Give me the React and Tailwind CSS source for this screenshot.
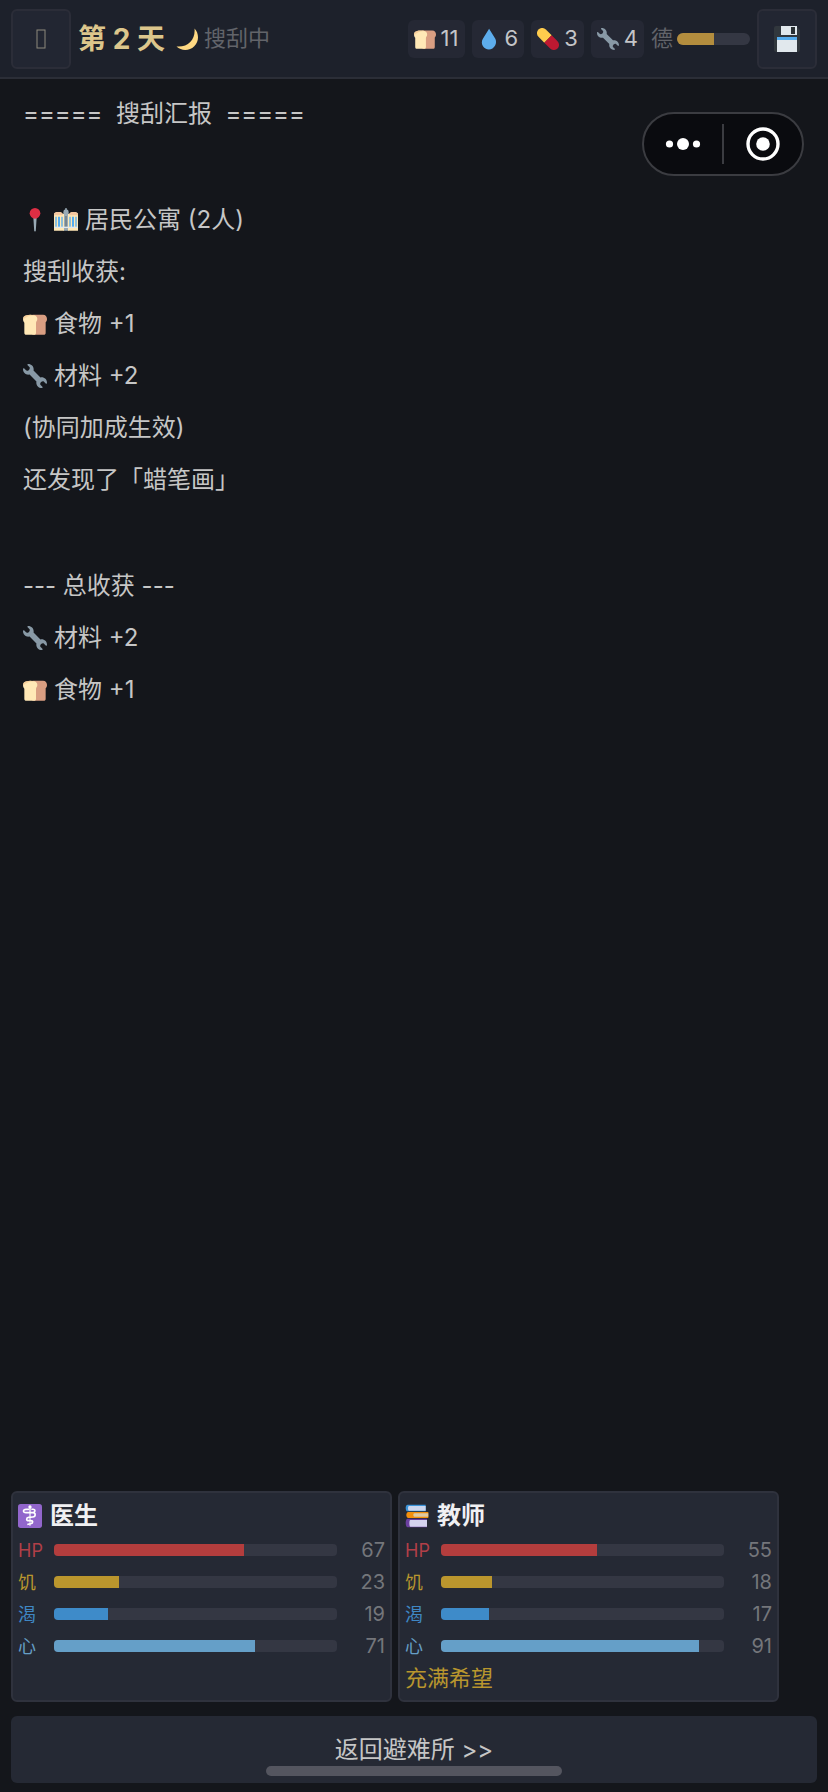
import React from 'react';

const Bread = ({ className }) => (
  <svg viewBox="0 0 36 36" className={className} aria-hidden="true">
    <path fill="#D99E82" d="M14 4h16c4 0 6 3 6 6.5 0 2.5-1 4-2 5V31c0 2-1 3-3 3H14z" />
    <path fill="#FFE8B6" d="M5 5c3-1 9-1 12 0 3 .8 4.500 3 4.500 5.500 0 3-2 3.500-2 6V31c0 2-1 3-2.500 3H5c-2 0-3-1-3-3V16C1 15 0 13 0 10.500 0 7.500 2 5.500 5 5z" />
    <path fill="#F4BF8A" d="M5 5c3-1 9-1 12 0-5 .7-8 .7-12 3-2 1-3 2-4.500 4C-.5 8 2 5.500 5 5z" opacity=".6" />
  </svg>
);

const Drop = ({ className }) => (
  <svg viewBox="0 0 36 36" className={className} aria-hidden="true">
    <path fill="#5DADEC" d="M28.344 17.768L18.148 1.09 8 17.654c-2.2 3.51-2.392 8.074-.081 11.854 3.285 5.373 10.363 7.098 15.811 3.857 5.446-3.24 7.199-10.22 4.614-15.597z" />
  </svg>
);

const Pill = ({ className }) => (
  <svg viewBox="0 0 36 36" className={className} aria-hidden="true">
    <g transform="rotate(45 18 18)">
      <path fill="#FFCC4D" d="M18 9.5H4.500a8.500 8.500 0 0 0 0 17H18z" />
      <path fill="#BE1931" d="M18 9.5h13.500a8.500 8.500 0 0 1 0 17H18z" />
    </g>
  </svg>
);

const Wrench = ({ className }) => (
  <svg viewBox="0 0 36 36" className={className} aria-hidden="true">
    <path fill="#8899A6" d="M27.989 19.977c-.622 0-1.225.078-1.806.213L15.811 9.818c.134-.581.212-1.184.212-1.806C16.023 3.587 12.436 0 8.012 0 7.11 0 5.91.916 6.909 1.915l2.997 2.998s.999 1.998-.999 3.995-3.996.998-3.996.998L1.915 6.909C.916 5.91 0 7.105 0 8.012c0 4.425 3.587 8.012 8.012 8.012.622 0 1.225-.078 1.806-.212l10.371 10.371c-.135.581-.213 1.184-.213 1.806 0 4.425 3.588 8.011 8.012 8.011.901 0 2.101-.916 1.102-1.915l-2.997-2.997s-.999-1.998.999-3.995 3.995-.999 3.995-.999l2.997 2.997c1 .999 1.916-.196 1.916-1.102 0-4.425-3.587-8.012-8.011-8.012z" />
  </svg>
);

const Moon = ({ className }) => (
  <svg viewBox="0 0 36 36" className={className} aria-hidden="true">
    <path fill="#FFD983" d="M30.312.776C32 19 20 32 .776 30.312c8.199 7.717 21.091 7.588 29.107-.429C37.9 21.867 38.03 8.975 30.312.776z" />
  </svg>
);

const Floppy = ({ className }) => (
  <svg viewBox="0 0 28 28" className={className} aria-hidden="true">
    <path fill="#31373D" d="M3 1h20l4 4v20a2 2 0 0 1-2 2H3a2 2 0 0 1-2-2V3a2 2 0 0 1 2-2z" />
    <path fill="#E1E8ED" d="M8 1h16v9H8zM4 15h20v12H4z" />
    <path fill="#292F33" d="M18 2h4v7h-4z" />
    <path fill="#55ACEE" d="M4 12h20v3H4z" />
  </svg>
);

const Pin = ({ className }) => (
  <svg viewBox="0 0 36 36" className={className} aria-hidden="true">
    <path fill="#99AAB5" d="M15.5 14h5l-1.300 20a1.200 1.200 0 0 1-2.400 0z" />
    <circle cx="18" cy="8" r="8" fill="#DD2E44" />
  </svg>
);

const Building = ({ className }) => (
  <svg viewBox="0 0 36 36" className={className} aria-hidden="true">
    <path fill="#99AAB5" d="M14 34V6a4 4 0 0 1 3-4V0h2v2a4 4 0 0 1 3 4v28z" />
    <path fill="#FFE8B6" d="M0 34V9c1-4 12-4 13 0h2v25zM36 34V9c-1-4-12-4-13 0h-2v25z" />
    <path fill="#F4C7A0" d="M0 9c1-4 12-4 13 0v2H0zM36 9c-1-4-12-4-13 0v2h13z" />
    <path fill="#55ACEE" d="M2 13h2v17H2zM6 13h3v17H6zM11 13h2v17h-2zM23 13h2v17h-2zM27 13h3v17h-3zM32 13h2v17h-2z" />
    <path fill="#66757F" d="M17 12h2v18h-2z" />
    <path fill="#E1E8ED" d="M0 28h36v2H0z" />
  </svg>
);

const Medical = ({ className }) => (
  <svg viewBox="0 0 36 36" className={className} aria-hidden="true">
    <rect width="36" height="36" rx="4" fill="#9266CC" />
    <circle cx="18" cy="4.5" r="2.500" fill="#FFF" />
    <path fill="#FFF" d="M17 4h2l-.4 29h-1.200z" />
    <path
      fill="none"
      stroke="#FFF"
      strokeWidth="2.4"
      strokeLinecap="round"
      d="M16 8h-4c-5 0-5 5 0 5h10c5 0 5 6 0 6.500l-6 .5c-4 .5-4 5 0 5h3c4 0 4 4 0 4.500l-4 1M21 8c5-1 6 3 2 5"
    />
  </svg>
);

const Books = ({ className }) => (
  <svg viewBox="0 0 36 36" className={className} aria-hidden="true">
    <path fill="#3B94D9" d="M4 1h27v10H4c-4 0-4-10 0-10z" />
    <path fill="#CCD6EE" d="M6 3h25v7H6c-2 0-2-7 0-7z" />
    <path fill="#F4900C" d="M5 12h30v9H5c-4 0-4-9 0-9z" />
    <path fill="#E0C9A0" d="M14 14h21v5H14c-2 0-2-5 0-5z" />
    <path fill="#6B3FA0" d="M4 22h29v13H4c-4 0-4-13 0-13z" />
    <path fill="#D5D3EE" d="M8 24h25v10H8c-2 0-2-10 0-10z" />
  </svg>
);

const resources = [
  { name: '食物', Icon: Bread, value: 11 },
  { name: '水', Icon: Drop, value: 6 },
  { name: '药品', Icon: Pill, value: 3 },
  { name: '材料', Icon: Wrench, value: 4 },
];

const report = [
  { text: '=====  搜刮汇报  =====' },
  { blank: true },
  { icons: [Pin, Building], text: '居民公寓 (2人)' },
  { text: '搜刮收获:' },
  { icons: [Bread], text: '食物 +1' },
  { icons: [Wrench], text: '材料 +2' },
  { text: '(协同加成生效)' },
  { text: '还发现了「蜡笔画」' },
  { blank: true },
  { text: '--- 总收获 ---' },
  { icons: [Wrench], text: '材料 +2' },
  { icons: [Bread], text: '食物 +1' },
];

const survivors = [
  { name: '医生', Icon: Medical, hp: 67, hunger: 23, thirst: 19, mind: 71 },
  { name: '教师', Icon: Books, hp: 55, hunger: 18, thirst: 17, mind: 91, status: '充满希望' },
];

const stats = [
  { key: 'hp', label: 'HP', text: 'text-[#b03f48]', bar: 'bg-[#b43d3d]' },
  { key: 'hunger', label: '饥', text: 'text-[#b8962e]', bar: 'bg-[#bb962d]' },
  { key: 'thirst', label: '渴', text: 'text-[#3f87c4]', bar: 'bg-[#3e8bc9]' },
  { key: 'mind', label: '心', text: 'text-[#669fc6]', bar: 'bg-[#659fc8]' },
];

const Header = () => (
  <header className="flex h-[79px] items-center gap-[7px] border-b-2 border-[#2b2e37] bg-[#1d212b] px-[11px]">
    <button
      aria-label="菜单"
      className="flex size-[60px] shrink-0 items-center justify-center rounded-md border-2 border-[#2b2d38] bg-[#222632]"
    >
      <svg viewBox="0 0 10 20" className="h-5 w-2.5" aria-hidden="true">
        <rect x="1" y="1" width="8" height="18" fill="none" stroke="#8d897c" />
      </svg>
    </button>
    <h1 className="whitespace-nowrap text-[28px] font-bold text-[#dcc68c]">第 2 天</h1>
    <div className="flex items-center gap-1.5 whitespace-nowrap pl-1 text-[22px] text-[#62646a]">
      <Moon className="size-[22px]" />
      搜刮中
    </div>

    <div className="ml-auto flex items-center gap-[7px]">
      {resources.map(({ name, Icon, value }) => (
        <div
          key={name}
          title={name}
          className="flex h-[38px] items-center gap-[5px] rounded-md bg-[#252834] px-1.5 text-[22px] text-[#c4c5c8]"
        >
          <Icon className="size-[22px]" />
          {value}
        </div>
      ))}
      <div className="flex items-center gap-1 text-[22px] text-[#62646a]">
        德
        <div className="h-3 w-[73px] overflow-hidden rounded-md bg-[#343743]">
          <div className="h-full bg-[#b38d3e]" style={{ width: '50%' }} />
        </div>
      </div>
      <button
        aria-label="保存"
        className="flex size-[60px] shrink-0 items-center justify-center rounded-md border-2 border-[#2b2d38] bg-[#222632]"
      >
        <Floppy className="size-7" />
      </button>
    </div>
  </header>
);

// Floating mini-program controls
const Capsule = () => (
  <div className="absolute right-6 top-28 flex h-16 w-[162px] items-center rounded-full border-2 border-[#3b3c41] bg-[#0a0b0f]">
    <button aria-label="更多" className="flex flex-1 justify-center">
      <svg viewBox="0 0 36 14" className="h-3.5 w-9" fill="#fff" aria-hidden="true">
        <circle cx="4.5" cy="7" r="3.6" />
        <circle cx="18" cy="7" r="6" />
        <circle cx="31.5" cy="7" r="3.6" />
      </svg>
    </button>
    <div className="h-10 w-0.5 bg-[#3b3c41]" />
    <button aria-label="关闭" className="flex flex-1 justify-center">
      <svg viewBox="0 0 34 34" className="size-[34px]" aria-hidden="true">
        <circle cx="17" cy="17" r="15" fill="none" stroke="#fff" strokeWidth="3.4" />
        <circle cx="17" cy="17" r="6.8" fill="#fff" />
      </svg>
    </button>
  </div>
);

const StatRow = ({ stat, value }) => (
  <div className="flex h-8 items-center">
    <span className={`w-9 shrink-0 text-[18px] ${stat.text}`}>{stat.label}</span>
    <div className="h-3 flex-1 overflow-hidden rounded-sm bg-[#343743]">
      <div className={`h-full ${stat.bar}`} style={{ width: `${value}%` }} />
    </div>
    <span className="w-12 shrink-0 text-right text-[20px] text-[#74767b]">{value}</span>
  </div>
);

const SurvivorCard = ({ survivor }) => {
  const { name, Icon, status } = survivor;
  return (
    <section className="rounded-md border-2 border-[#2f323d] bg-[#252934] px-[5px] pb-1.5 pt-[7px]">
      <h2 className="mb-0.5 flex h-8 items-center gap-2 text-2xl font-bold text-[#f0f0f2]">
        <Icon className="size-6" />
        {name}
      </h2>
      {stats.map(stat => (
        <StatRow key={stat.key} stat={stat} value={survivor[stat.key]} />
      ))}
      <p className="h-8 text-[22px] leading-8 text-[#b8962e]">{status}</p>
    </section>
  );
};

const App = () => {
  return (
    <div className="relative flex min-h-screen flex-col bg-[#14161b] font-['Inter','Noto_Sans_CJK_SC',sans-serif]">
      <Header />
      <Capsule />

      <main className="flex-1 px-[23px] pt-[9px] text-2xl text-[#c6c6c6]">
        {report.map((line, i) =>
          line.blank ? (
            <div key={i} className="h-[54px]" />
          ) : (
            <p key={i} className="flex h-[52px] items-center gap-[7px] whitespace-pre">
              {line.icons?.map((Icon, j) => (
                <Icon key={j} className="size-6" />
              ))}
              {line.text}
            </p>
          )
        )}
      </main>

      <div className="grid grid-cols-2 gap-1.5 pl-[11px] pr-[49px]">
        {survivors.map(s => (
          <SurvivorCard key={s.name} survivor={s} />
        ))}
      </div>

      <footer className="px-[11px] pb-[9px] pt-3.5">
        <button className="h-[67px] w-full rounded-md bg-[#252934] text-2xl text-[#c6c6c6]">
          返回避难所 &gt;&gt;
        </button>
      </footer>

      {/* Home indicator */}
      <div className="absolute bottom-4 left-1/2 h-2.5 w-[296px] -translate-x-1/2 rounded-full bg-[#54555f]" />
    </div>
  );
};

export default App;
